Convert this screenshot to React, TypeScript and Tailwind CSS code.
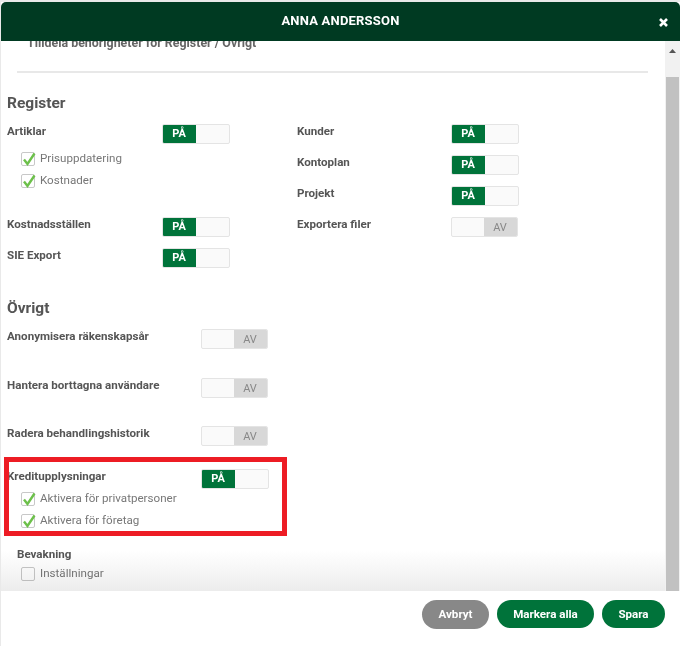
const font = "font-['Roboto',sans-serif]";

function Toggle({ on }: { on: boolean }) {
  if (on) {
    return (
      <div className="flex h-5 w-[68px] shrink-0 overflow-hidden rounded-[2px] border border-[#e4e4e4] bg-[#fafafa]">
        <div className="flex w-[33px] items-center justify-center bg-[#00733a] pr-[1px] pt-[1px] text-[11px] font-bold text-white">PÅ</div>
      </div>
    );
  }
  return (
    <div className="flex h-5 w-[67px] shrink-0 justify-end overflow-hidden rounded-[2px] border border-[#e4e4e4] bg-[#fafafa]">
      <div className="flex w-[33px] items-center justify-center bg-[#d8d8d8] pr-[1px] pt-[2px] text-[11px] text-[#888]">AV</div>
    </div>
  );
}

function Check({ label, checked = true }: { label: string; checked?: boolean }) {
  return (
    <div className="flex h-[14px] items-center gap-[5px] text-[11.6px] text-[#777]">
      <div className="relative h-[14px] w-[14px] shrink-0 rounded-[2px] border border-[#c8c8c8] bg-white">
        {checked && (
          <svg className="absolute -left-[1px] -top-[2px]" width="16" height="16" viewBox="0 0 16 16">
            <path d="M3 8.5 L6.5 13 L13.5 2.5" fill="none" stroke="#6cc04a" strokeWidth="2.4" />
          </svg>
        )}
      </div>
      {label}
    </div>
  );
}

function Row({ label, on, width, rowH = "h-[31px]" }: { label: string; on: boolean; width: string; rowH?: string }) {
  return (
    <div className={`flex items-start ${rowH}`}>
      <div className={`${width} text-[11.6px] font-bold leading-[14px] text-[#555]`}>{label}</div>
      <Toggle on={on} />
    </div>
  );
}

export default function App() {
  return (
    <div className={`${font} relative h-[646px] w-[680px] overflow-hidden bg-[#e9e9e9] pl-[1px] pt-[2px]`}>
      <div className="flex h-[644px] flex-col bg-white">
        <header className="relative flex h-[39px] shrink-0 items-center justify-center rounded-t-[5px] bg-[#003a22] pb-[2px] text-[13px] font-bold tracking-[0.2px] text-white">
          ANNA ANDERSSON
          <svg className="absolute right-[12px] top-[16px]" width="9" height="9" viewBox="0 0 9 9">
            <path d="M1 1 L8 8 M8 1 L1 8" stroke="#fff" strokeWidth="2.6" />
          </svg>
        </header>

        <div className="flex h-[550px] shrink-0 overflow-hidden">
          <div className="relative min-w-0 flex-1 overflow-hidden">
            <div className="-mt-[5px] pl-[26px] text-[12.4px] font-bold leading-[14px] text-[#666]">Tilldela behörigheter för Register / Övrigt</div>
            <div className="ml-4 mr-[17px] mt-[21px] h-[2px] bg-[#e8e8e8]" />

            <div className="pl-[6px]">
              <h2 className="mt-[20px] text-[15.5px] font-bold leading-5 text-[#555]">Register</h2>

              <div className="mt-[11px] flex">
                <div className="w-[290px]">
                  <Row label="Artiklar" on width="w-[155px]" rowH="h-[28px]" />
                  <div className="flex h-[65px] flex-col gap-2 pl-[14px]">
                    <Check label="Prisuppdatering" />
                    <Check label="Kostnader" />
                  </div>
                  <Row label="Kostnadsställen" on width="w-[155px]" />
                  <Row label="SIE Export" on width="w-[155px]" />
                </div>
                <div>
                  <Row label="Kunder" on width="w-[154px]" />
                  <Row label="Kontoplan" on width="w-[154px]" />
                  <Row label="Projekt" on width="w-[154px]" />
                  <Row label="Exportera filer" on={false} width="w-[154px]" />
                </div>
              </div>

              <h2 className="mt-[19px] text-[15.5px] font-bold leading-5 text-[#555]">Övrigt</h2>

              <div className="mt-[11px]">
                <Row label="Anonymisera räkenskapsår" on={false} width="w-[194px]" rowH="h-[49px]" />
                <Row label="Hantera borttagna användare" on={false} width="w-[194px]" rowH="h-[48px]" />
                <Row label="Radera behandlingshistorik" on={false} width="w-[194px]" rowH="h-[43px]" />
                <Row label="Kreditupplysningar" on width="w-[194px]" rowH="h-[23px]" />
                <div className="flex flex-col gap-2 pl-[14px]">
                  <Check label="Aktivera för privatpersoner" />
                  <Check label="Aktivera för företag" />
                </div>
              </div>

              <div className="mt-[19px] pl-[10px] text-[11.6px] font-bold leading-[14px] text-[#555]">Bevakning</div>
              <div className="mt-[6px] pl-[14px]">
                <Check label="Inställningar" checked={false} />
              </div>
            </div>

            <div className="absolute inset-x-0 bottom-0 h-[40px] bg-gradient-to-b from-white to-[#ececec] mix-blend-multiply" />
          </div>

          <div className="flex w-[15px] shrink-0 flex-col bg-[#f1f1f1]">
            <div className="flex h-[36px] shrink-0 justify-center pt-[8px]">
              <svg width="7" height="4" viewBox="0 0 7 4"><path d="M3.5 0 L7 4 L0 4 Z" fill="#555" /></svg>
            </div>
            <div className="mx-[1px] flex-1 bg-[#c1c1c1]" />
          </div>
        </div>

        <footer className="flex flex-1 items-start justify-end gap-2 pr-[15px] pt-[9px] text-[11.6px] font-bold text-white">
          <button className="flex h-[29px] w-[67px] items-center justify-center rounded-full bg-[#888] pt-[1px]">Avbryt</button>
          <button className="flex h-[28px] w-[97px] items-center justify-center rounded-full bg-[#00733a] pt-[1px]">Markera alla</button>
          <button className="flex h-[28px] w-[63px] items-center justify-center rounded-full bg-[#00733a] pt-[1px]">Spara</button>
        </footer>
      </div>

      <div className="absolute left-[4px] top-[457px] h-[79px] w-[283px] border-[5px] border-[#ed1c24]" />
    </div>
  );
}
